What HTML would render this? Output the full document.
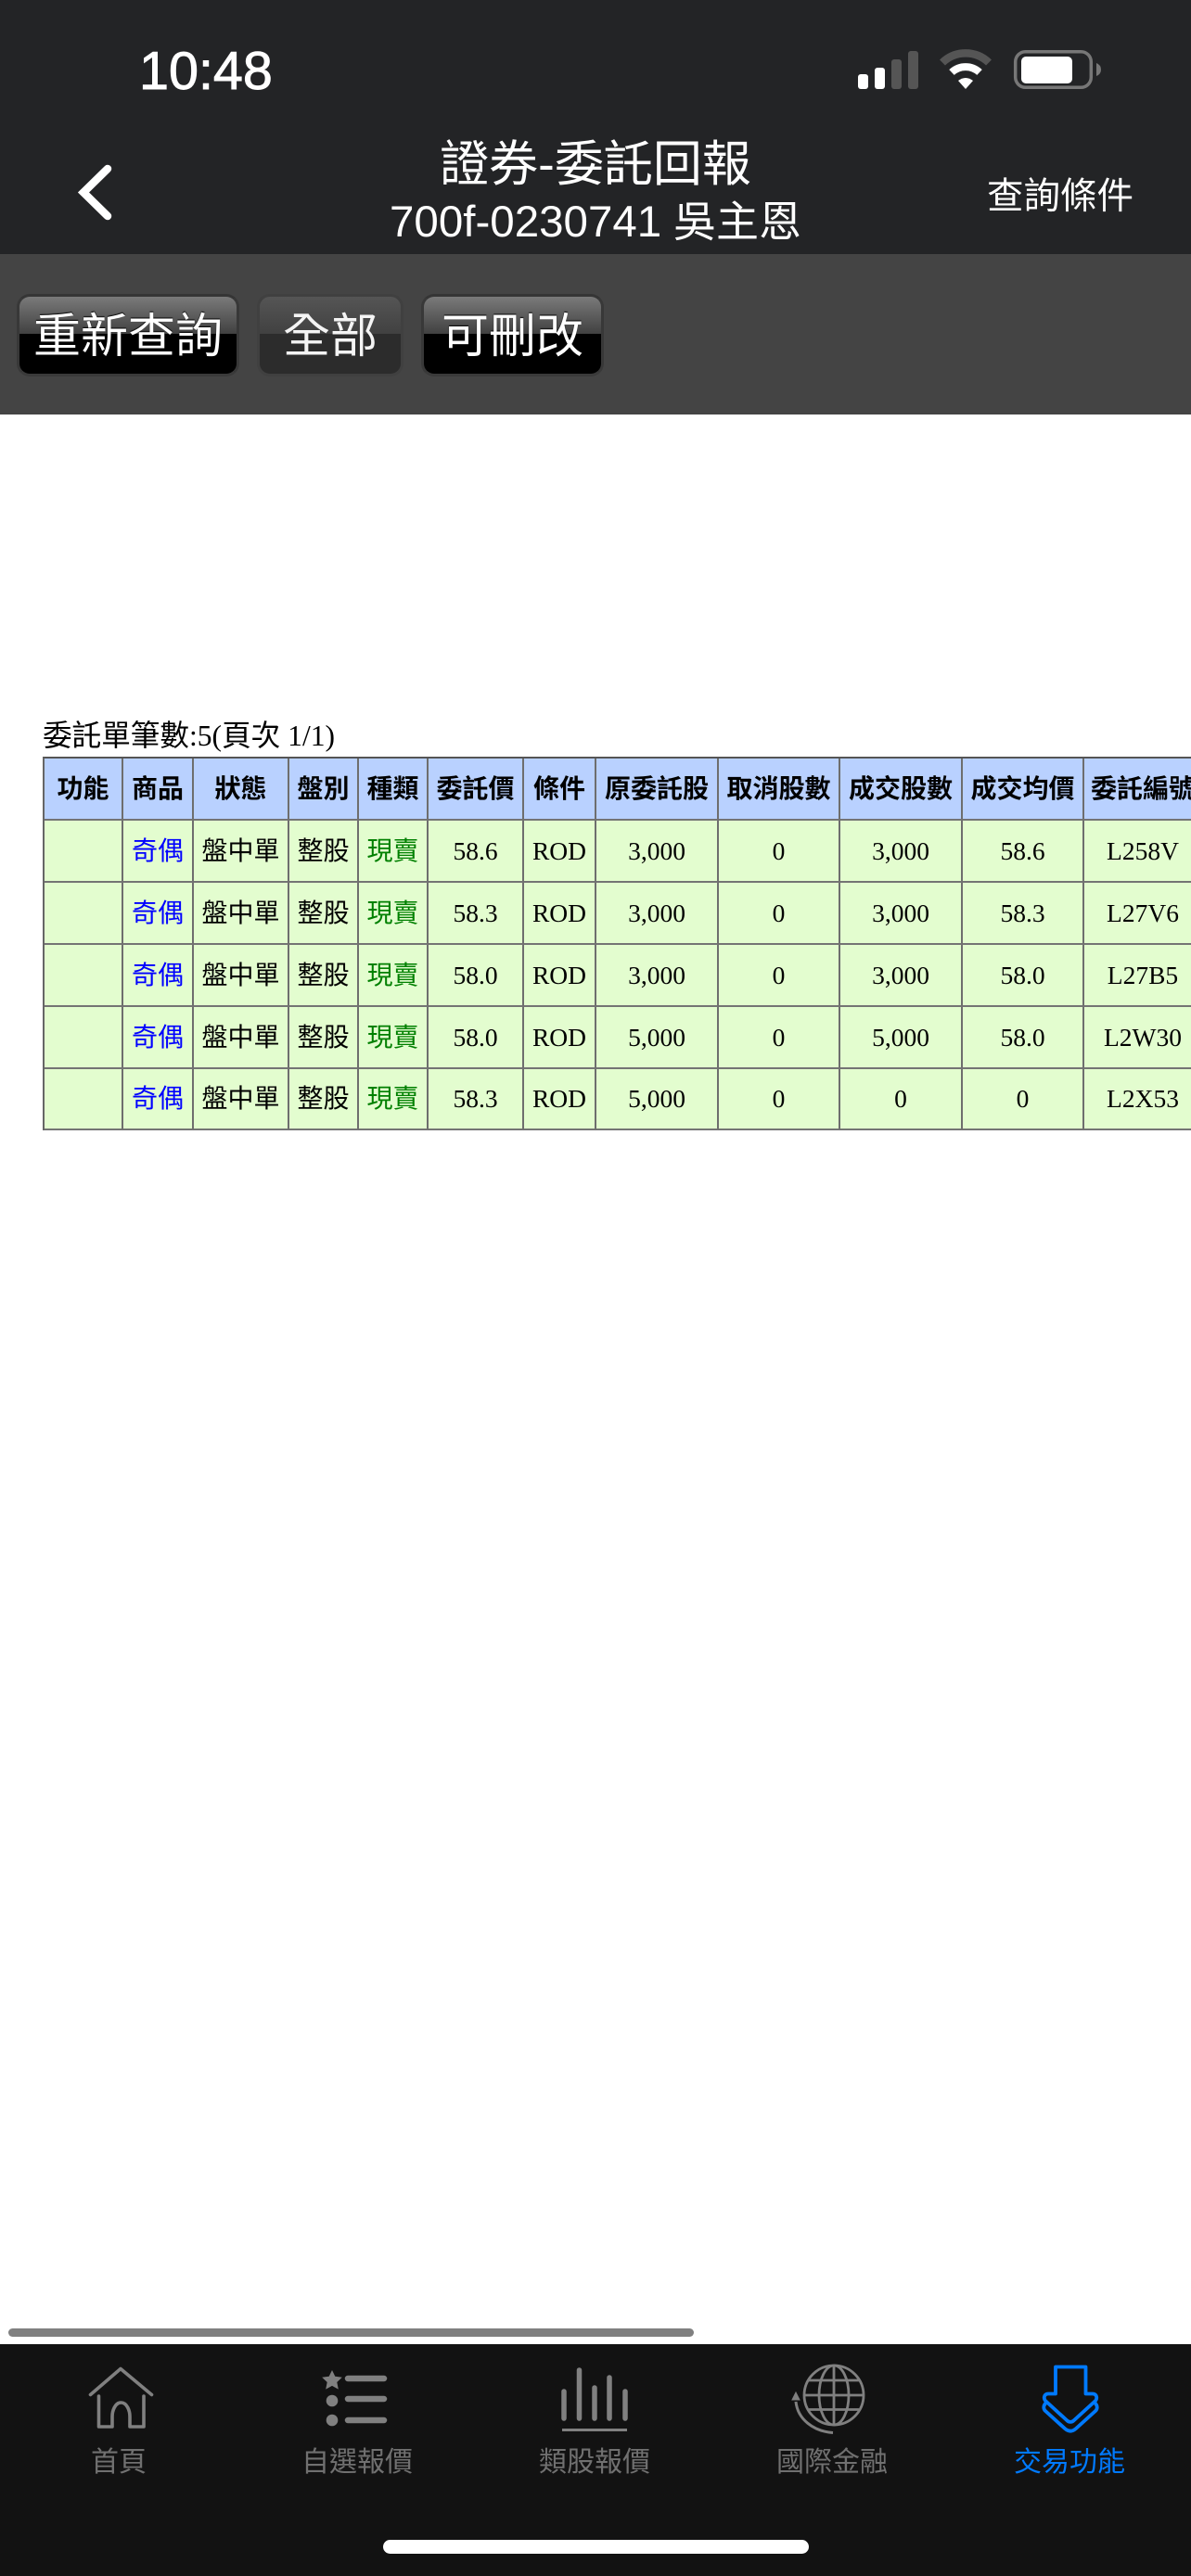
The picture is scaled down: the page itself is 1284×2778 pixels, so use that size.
<!DOCTYPE html>
<html lang="zh-Hant">
<head>
<meta charset="utf-8">
<title>證券-委託回報</title>
<style>
*{box-sizing:border-box}
html,body{margin:0;padding:0;background:#fff}
body{position:relative;width:1284px;height:2778px;overflow:hidden;font-family:"Liberation Sans","Noto Sans CJK TC",sans-serif}
.t{position:absolute;white-space:nowrap;text-align:center;color:#fff}
#hdr{position:absolute;left:0;top:0;width:1284px;height:274px;background:#232426}
#bar{position:absolute;left:0;top:274px;width:1284px;height:173px;background:#444}
.btn{position:absolute;top:317px;height:89px;border-radius:14px;border:3px solid #383838;border-top-color:#353535;border-bottom-color:#3a3a3a;background:linear-gradient(to bottom,#7a7a7a 0,#414141 48%,#000 48.5%,#000 100%);color:#fff;font-size:51px;line-height:86px;text-align:center;white-space:nowrap;text-shadow:0 -1px 1px #000}
.off{background:linear-gradient(to bottom,#555 0,#414141 48%,#2c2c2c 48.5%,#2c2c2c 100%);border-color:#404040;color:#f4f4f4;text-shadow:none}
#cap{position:absolute;left:46px;top:775px;font:31.6px/38px "Liberation Serif","Noto Sans CJK TC",serif;color:#000;white-space:nowrap}
#wrap{position:absolute;left:46px;top:816px;width:1238px;height:404px;overflow:hidden}
table{border-collapse:separate;border-spacing:0;table-layout:fixed;width:1251px;border-left:2px solid #666;border-top:2px solid #555;font:28px "Liberation Serif","Noto Sans CJK TC",serif;color:#000}
th,td{height:67px;padding:0;text-align:center;vertical-align:middle;border-right:2px solid #6e6e6e;border-bottom:2px solid #747474;white-space:nowrap;overflow:visible}
th{background:#b9d1ff;font-weight:bold;height:67px}
td{background:#e3fdcf}
tr:last-child td{height:66px}
td,th{font-size:27.5px}
s{text-decoration:none;position:relative;top:-2px;font-size:28px}
.b{color:#0000ff}.g{color:#008000}
#tab{position:absolute;left:0;top:2528px;width:1284px;height:250px;background:#121212}
.l{position:absolute;top:2637px;height:38px;line-height:38px;font-size:30px;color:#707070;white-space:nowrap;text-align:center;width:200px}
#sc{position:absolute;left:9px;top:2511px;width:739px;height:9px;border-radius:5px;background:#808080}
#hi{position:absolute;left:413px;top:2739px;width:459px;height:15px;border-radius:8px;background:#fff}
svg{position:absolute;left:0;top:0}
</style>
</head>
<body>
<div id="hdr"></div>
<div id="bar"></div>

<div class="t" style="left:150px;top:45px;width:150px;font-size:57.5px;line-height:64px;-webkit-text-stroke:.9px #fff;text-align:left">10:48</div>
<div class="t" style="left:342px;top:147px;width:600px;font-size:53px;line-height:62px">證券-委託回報</div>
<div class="t" style="left:342px;top:209px;width:600px;font-size:46px;line-height:60px"><span style="font-size:47.5px">700f-0230741</span> 吳主恩</div>
<div class="t" style="left:1062px;top:188px;width:162px;font-size:39.500px;line-height:48px">查詢條件</div>

<div class="btn" style="left:18px;width:240px">重新查詢</div>
<div class="btn off" style="left:277px;width:158px">全部</div>
<div class="btn" style="left:454px;width:197px">可刪改</div>

<div id="cap">委託單筆數:5(頁次 1/1)</div>
<div id="wrap">
<table>
<colgroup><col style="width:85px"><col style="width:76px"><col style="width:103px"><col style="width:75px"><col style="width:75px"><col style="width:103px"><col style="width:78px"><col style="width:132px"><col style="width:131px"><col style="width:132px"><col style="width:131px"><col style="width:128px"></colgroup>
<tr><th><s>功能</s></th><th><s>商品</s></th><th><s>狀態</s></th><th><s>盤別</s></th><th><s>種類</s></th><th><s>委託價</s></th><th><s>條件</s></th><th><s>原委託股</s></th><th><s>取消股數</s></th><th><s>成交股數</s></th><th><s>成交均價</s></th><th><s>委託編號</s></th></tr>
<tr><td></td><td class="b"><s>奇偶</s></td><td><s>盤中單</s></td><td><s>整股</s></td><td class="g"><s>現賣</s></td><td>58.6</td><td>ROD</td><td>3,000</td><td>0</td><td>3,000</td><td>58.6</td><td>L258V</td></tr>
<tr><td></td><td class="b"><s>奇偶</s></td><td><s>盤中單</s></td><td><s>整股</s></td><td class="g"><s>現賣</s></td><td>58.3</td><td>ROD</td><td>3,000</td><td>0</td><td>3,000</td><td>58.3</td><td>L27V6</td></tr>
<tr><td></td><td class="b"><s>奇偶</s></td><td><s>盤中單</s></td><td><s>整股</s></td><td class="g"><s>現賣</s></td><td>58.0</td><td>ROD</td><td>3,000</td><td>0</td><td>3,000</td><td>58.0</td><td>L27B5</td></tr>
<tr><td></td><td class="b"><s>奇偶</s></td><td><s>盤中單</s></td><td><s>整股</s></td><td class="g"><s>現賣</s></td><td>58.0</td><td>ROD</td><td>5,000</td><td>0</td><td>5,000</td><td>58.0</td><td>L2W30</td></tr>
<tr><td></td><td class="b"><s>奇偶</s></td><td><s>盤中單</s></td><td><s>整股</s></td><td class="g"><s>現賣</s></td><td>58.3</td><td>ROD</td><td>5,000</td><td>0</td><td>0</td><td>0</td><td>L2X53</td></tr>
</table>
</div>

<div id="sc"></div>
<div id="tab"></div>
<div class="l" style="left:28px">首頁</div>
<div class="l" style="left:285px">自選報價</div>
<div class="l" style="left:541px">類股報價</div>
<div class="l" style="left:797px">國際金融</div>
<div class="l" style="left:1053px;color:#007aff">交易功能</div>
<div id="hi"></div>

<svg width="1284" height="2778" viewBox="0 0 1284 2778" fill="none">
  <!-- signal -->
  <rect x="925" y="80" width="11" height="16" rx="3" fill="#fff"/>
  <rect x="943" y="73" width="11" height="23" rx="3" fill="#fff"/>
  <rect x="961" y="64" width="11" height="32" rx="3" fill="#555"/>
  <rect x="979" y="55" width="11" height="41" rx="3" fill="#555"/>
  <!-- wifi -->
  <path d="M1016 67.5A36 36 0 0 1 1066 67.5" stroke="#555" stroke-width="8.5"/>
  <path d="M1026 78A22 22 0 0 1 1056 78" stroke="#fff" stroke-width="8"/>
  <path d="M1033 87Q1041 81 1049 87L1041 96Z" fill="#fff"/>
  <!-- battery -->
  <rect x="1094.7" y="55.7" width="81.6" height="38.6" rx="11" stroke="#777" stroke-width="3.5"/>
  <rect x="1101" y="61" width="55" height="29" rx="5" fill="#fff"/>
  <path d="M1182 68Q1187 70 1187 75T1182 82Z" fill="#777"/>
  <!-- back -->
  <path d="M116 182L90 207.5L116 233" stroke="#fff" stroke-width="8.5" stroke-linecap="round" stroke-linejoin="miter"/>

  <!-- home -->
  <g stroke="#808080" stroke-width="3.6" stroke-linecap="round" stroke-linejoin="round">
    <path d="M97.5 2582.5L130 2554.5L163.5 2582.5"/>
    <path d="M106.5 2584V2617H121V2606C121 2600 124 2591 130.500 2591C137 2591 140 2600 140 2606V2617H155V2584"/>
  </g>
  <!-- list -->
  <path d="M358 2556l3.300 6.800 7.500 1-5.500 5.200 1.500 7.600-6.800-3.700-6.800 3.700 1.500-7.600-5.500-5.200 7.500-1z" fill="#808080"/>
  <circle cx="358" cy="2589" r="6.300" fill="#808080"/>
  <circle cx="358" cy="2610" r="6.300" fill="#808080"/>
  <g stroke="#808080" stroke-width="6.500" stroke-linecap="round">
    <path d="M375 2565H414M375 2587H414M375 2610H414"/>
  </g>
  <!-- chart -->
  <g stroke="#808080" stroke-width="5.500" stroke-linecap="round">
    <path d="M608 2579V2608M624.500 2556V2608M641 2575V2608M657 2564V2608M674 2579V2608"/>
  </g>
  <path d="M606 2620.500H676" stroke="#808080" stroke-width="3"/>
  <!-- globe -->
  <g stroke="#808080" stroke-width="2.800">
    <circle cx="899" cy="2583" r="32"/>
    <ellipse cx="899" cy="2583" rx="16" ry="32"/>
    <path d="M899 2551V2615M867 2583H931M872 2567H926M872 2598.500H926"/>
    <path d="M858 2590C860 2609 877 2622 898 2623.500" stroke-width="3"/>
  </g>
  <path d="M858 2580l-4 8h8z" fill="#808080" stroke="#808080" stroke-width="1"/>
  <!-- trade -->
  <g stroke="#007aff" stroke-width="3.800" stroke-linejoin="round" stroke-linecap="round">
    <path d="M1138 2552.500H1170.500V2581.500H1178C1182 2581.500 1183.500 2586 1181 2589L1158 2610C1155.500 2612.500 1152.500 2612.500 1150 2610L1127 2589C1124.500 2586 1126 2581.500 1130 2581.500H1138Z"/>
    <path d="M1127 2592C1124.500 2595 1125 2598 1127 2600L1148 2619C1152 2622.500 1156 2622.500 1160 2619L1181 2600C1183 2598 1183.500 2595 1181 2592"/>
  </g>
</svg>
</body>
</html>
